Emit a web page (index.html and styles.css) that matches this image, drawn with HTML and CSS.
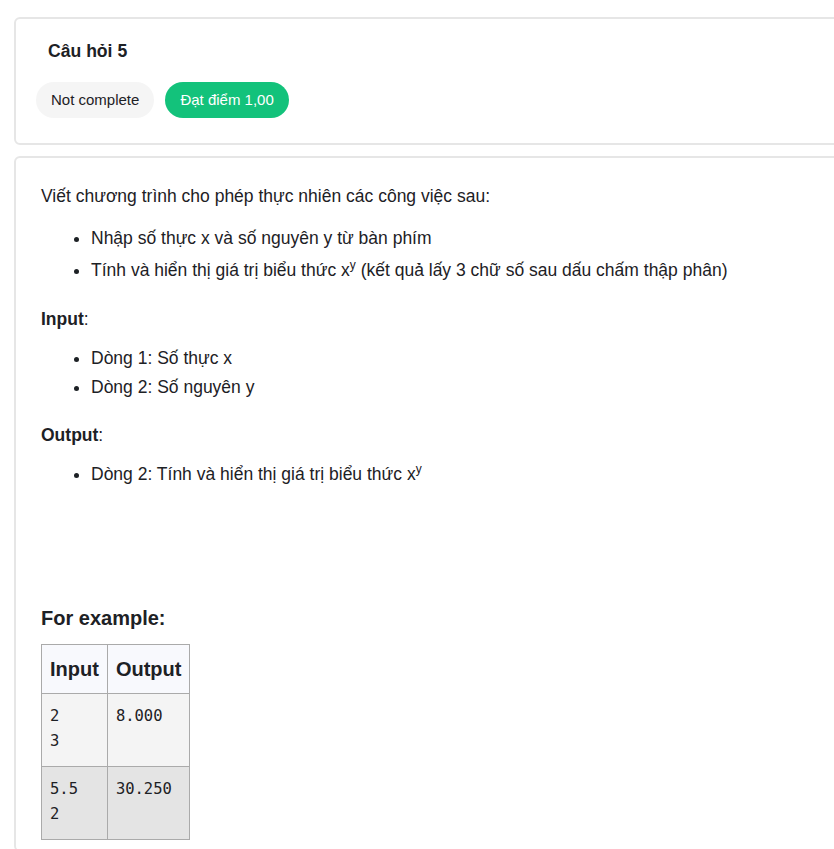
FILE: index.html
```html
<!DOCTYPE html>
<html lang="vi">
<head>
<meta charset="utf-8">
<title>Câu hỏi 5</title>
<link rel="stylesheet" href="styles.css">
</head>
<body>
<div class="page">
  <section class="card info">
    <h3 class="qtitle">Câu hỏi 5</h3>
    <div class="badges">
      <span class="badge badge-muted">Not complete</span>
      <span class="badge badge-green">Đạt điểm 1,00</span>
    </div>
  </section>
  <section class="card content">
    <p class="intro">Viết chương trình cho phép thực nhiên các công việc sau:</p>
    <ul class="list list-a">
      <li>Nhập số thực x và số nguyên y từ bàn phím</li>
      <li>Tính và hiển thị giá trị biểu thức x<sup>y</sup> (kết quả lấy 3 chữ số sau dấu chấm thập phân)</li>
    </ul>
    <p class="label"><strong>Input</strong>:</p>
    <ul class="list list-b">
      <li>Dòng 1: Số thực x</li>
      <li>Dòng 2: Số nguyên y</li>
    </ul>
    <p class="label label-out"><strong>Output</strong>:</p>
    <ul class="list list-b">
      <li>Dòng 2: Tính và hiển thị giá trị biểu thức x<sup>y</sup></li>
    </ul>
    <h4 class="example">For example:</h4>
    <table class="examples">
      <thead>
        <tr><th>Input</th><th>Output</th></tr>
      </thead>
      <tbody>
        <tr class="row-odd"><td><pre>2
3</pre></td><td><pre>8.000</pre></td></tr>
        <tr class="row-even"><td><pre>5.5
2</pre></td><td><pre>30.250</pre></td></tr>
      </tbody>
    </table>
  </section>
</div>
</body>
</html>
```
FILE: styles.css
```css
html, body {
  margin: 0;
  padding: 0;
  background: #ffffff;
  overflow: hidden;
}
body {
  font-family: "Liberation Sans", Arial, sans-serif;
  color: #1d2125;
  font-size: 16px;
}
.page {
  padding: 17px 0 0 14px;
  display: flex;
  flex-direction: column;
  gap: 11px;
}
.card {
  width: 860px;
  border: 2px solid #e6e6e6;
  border-radius: 6px;
  background: #fff;
}
.info {
  height: 124px;
  padding: 0 0 0 20px;
}
.qtitle {
  margin: 21px 0 0 12px;
  font-size: 17.6px;
  line-height: 22px;
  font-weight: 700;
}
.badges {
  display: flex;
  gap: 11px;
  margin-top: 20px;
}
.badge {
  display: inline-block;
  height: 36px;
  line-height: 36px;
  padding: 0 15px;
  border-radius: 18px;
  font-size: 15px;
}
.badge-muted {
  background: #f5f5f5;
  color: #1d2125;
}
.badge-green {
  background: #13c27b;
  color: #ffffff;
}
.content {
  padding: 25px 0 10px 25px;
  font-size: 17.5px;
}
.intro {
  margin: 0;
  line-height: 26px;
}
.list {
  margin: 0;
  padding-left: 50px;
}
.list li {
  line-height: 26px;
}
.list-a {
  margin-top: 16px;
}
.list-a li {
  margin-bottom: 6px;
}
.list-b {
  margin-top: 13px;
}
.list-b li {
  margin-bottom: 3px;
}
.label {
  margin: 23px 0 0;
  line-height: 26px;
}
.label-out {
  margin-top: 22px;
}
sup {
  font-size: 12px;
  line-height: 0;
  vertical-align: 7px;
}
.example {
  margin: 119px 0 0;
  font-size: 20px;
  line-height: 24px;
  font-weight: 700;
}
.examples {
  margin-top: 14px;
  border-collapse: collapse;
  font-size: 15px;
}
.examples th,
.examples td {
  border: 1px solid #aaaaaa;
  text-align: left;
  vertical-align: top;
  padding: 12px 8px;
}
.examples th {
  background: #f8f9fd;
  font-size: 20px;
  line-height: 24px;
  font-weight: 700;
}
.examples td {
  padding: 10px 8px 12px;
}
.examples pre {
  margin: 0;
  font-family: "DejaVu Sans Mono", "Liberation Mono", monospace;
  font-size: 15.5px;
  line-height: 25px;
  color: #1d2125;
}
.row-odd td {
  background: #f4f4f4;
}
.row-even td {
  background: #e4e4e4;
}
```
